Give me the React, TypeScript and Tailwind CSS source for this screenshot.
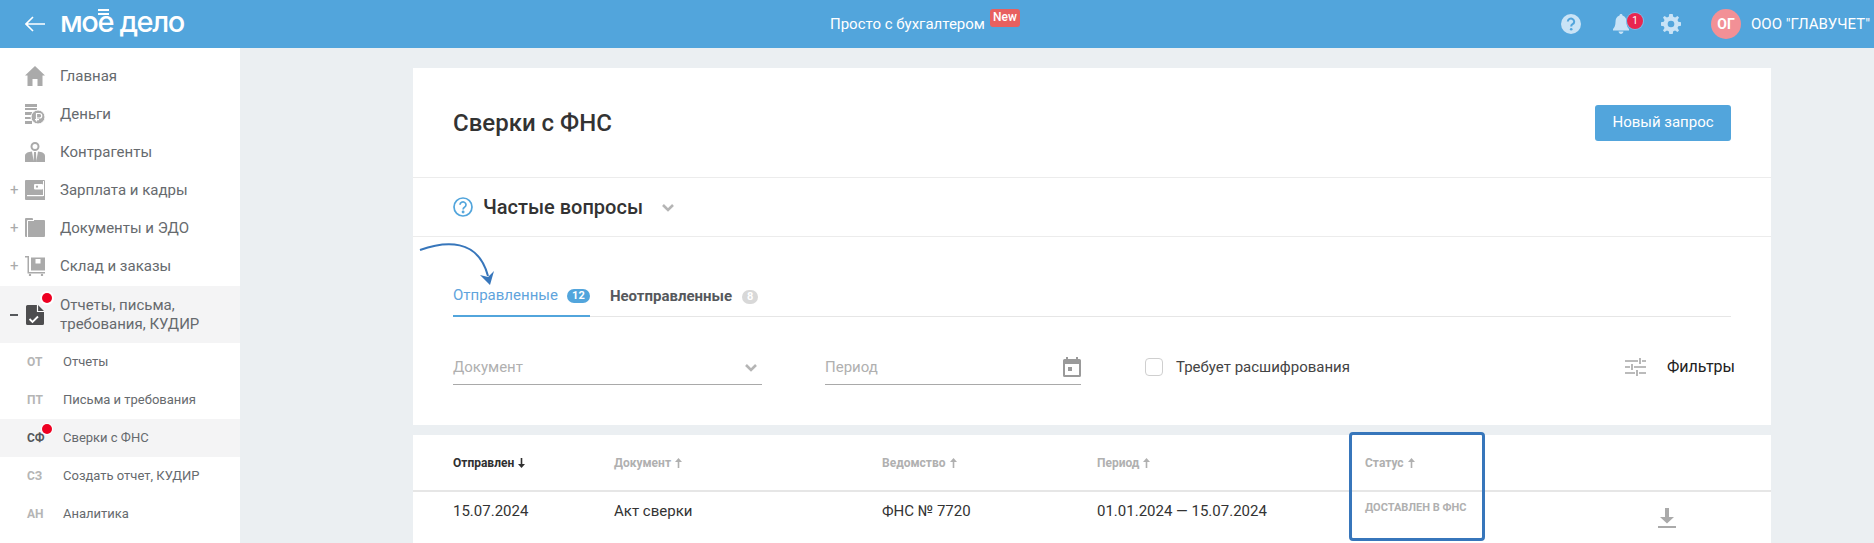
import React from "react"

const Home = () => (
    <svg width="20" height="20" viewBox="0 0 20 20" fill="#aaaaaa">
        <path d="M10 0 L20 9.5 L17.5 9.5 L17.5 20 L12.5 20 L12.5 13 L7.5 13 L7.5 20 L2.5 20 L2.5 9.5 L0 9.5 Z" />
    </svg>
)

const Money = () => (
    <svg width="20" height="20" viewBox="0 0 20 20" fill="#aaaaaa">
        <rect x="0" y="0" width="12" height="3" />
        <rect x="0" y="4" width="12" height="2" />
        <rect x="0" y="8" width="7" height="3" />
        <rect x="0" y="13" width="6" height="2" />
        <rect x="0" y="17" width="7" height="3" />
        <circle cx="13" cy="13" r="7" stroke="#fff" strokeWidth="1" />
        <path d="M11.5 17.5 V9.5 h3 a2 2 0 0 1 0 4.5 h-3 M10 15.7 h4" fill="none" stroke="#fff" strokeWidth="1.2" />
    </svg>
)

const Person = () => (
    <svg width="20" height="20" viewBox="0 0 20 20" fill="#aaaaaa">
        <circle cx="10" cy="4.5" r="3.5" fill="none" stroke="#aaaaaa" strokeWidth="2" />
        <path d="M0 20 V14 C0 11 3 10 7 9.5 L8.8 20 Z M20 20 V14 C20 11 17 10 13 9.5 L11.2 20 Z M9 10 h2 l.4 10 h-2.8 Z" />
    </svg>
)

const Wallet = () => (
    <svg width="20" height="20" viewBox="0 0 20 20" fill="#aaaaaa">
        <path d="M1 0 H19 a1 1 0 0 1 1 1 V20 H1 a1 1 0 0 1 -1 -1 V1 a1 1 0 0 1 1 -1 Z" />
        <rect x="2" y="15" width="16" height="1.2" fill="#fff" />
        <rect x="18" y="1" width="1" height="15" fill="#fff" />
        <rect x="9" y="4" width="9" height="5.5" rx="1" fill="#fff" />
        <circle cx="12" cy="6.7" r="1.1" fill="#aaaaaa" />
    </svg>
)

const Folder = () => (
    <svg width="20" height="20" viewBox="0 0 20 20" fill="#aaaaaa">
        <path d="M1 0 H7 a1 1 0 0 1 1 1 V2 H19 a1 1 0 0 1 1 1 V18 a1 1 0 0 1 -1 1 H1 a1 1 0 0 1 -1 -1 V1 a1 1 0 0 1 1 -1 Z" />
        <path d="M2.5 19 V2.5 H9" fill="none" stroke="#fff" strokeWidth="1" />
    </svg>
)

const Cart = () => (
    <svg width="20" height="20" viewBox="0 0 20 20" fill="#aaaaaa">
        <path d="M0 0 H4 V16 H20 V17.5 H2.5 V1.5 H0 Z" />
        <rect x="6" y="1.5" width="14" height="13" />
        <rect x="10.5" y="3" width="5" height="4.5" fill="#fff" />
        <circle cx="5" cy="19" r="1.2" />
        <circle cx="17" cy="19" r="1.2" />
    </svg>
)

const ReportDoc = () => (
    <svg width="18" height="20" viewBox="0 0 18 20">
        <path d="M1.5 0 H12 L18 6 V18.5 a1.5 1.5 0 0 1 -1.5 1.5 H1.5 A1.5 1.5 0 0 1 0 18.5 V1.5 A1.5 1.5 0 0 1 1.5 0 Z" fill="#4d4d4f" />
        <path d="M11.5 0 V6.5 H18" fill="none" stroke="#fff" strokeWidth="1.2" />
        <path d="M3.5 14 L6.5 17 L12 11.5" fill="none" stroke="#fff" strokeWidth="1.8" />
    </svg>
)

const Row = ({icon, label, plus}: {icon: React.ReactNode, label: string, plus?: boolean}) => (
    <div className="flex h-[38px] items-center relative pl-[25px]">
        {plus && <span className="absolute left-[10px] text-[15px] text-[#aaaaaa]">+</span>}
        <span className="w-[20px] h-[20px] flex items-center justify-center">{icon}</span>
        <span className="ml-[15px] text-[15px] text-[#666a6e]">{label}</span>
    </div>
)

const SubRow = ({short, label, active}: {short: string, label: string, active?: boolean}) => (
    <div className={active ? "flex h-[38px] items-center relative pl-[27px] bg-[#f4f4f5]" : "flex h-[38px] items-center relative pl-[27px]"}>
        <span className={active ? "w-[36px] text-[12px] font-bold text-[#55585c]" : "w-[36px] text-[12px] font-bold text-[#b5b5b5]"}>{short}</span>
        <span className="text-[13px] text-[#666a6e]">{label}</span>
        {active && <span className="absolute left-[42px] top-[5px] w-[10px] h-[10px] rounded-full bg-[#ee0022] ring-1 ring-white"></span>}
    </div>
)

const Sidebar = () => (
    <aside className="w-[240px] shrink-0 bg-white pt-[9px]">
        <Row icon={<Home />} label="Главная" />
        <Row icon={<Money />} label="Деньги" />
        <Row icon={<Person />} label="Контрагенты" />
        <Row icon={<Wallet />} label="Зарплата и кадры" plus />
        <Row icon={<Folder />} label="Документы и ЭДО" plus />
        <Row icon={<Cart />} label="Склад и заказы" plus />
        <div className="flex h-[57px] mt-[1px] items-center relative pl-[26px] bg-[#f4f4f5]">
            <span className="absolute left-[10px] w-[8px] h-[2px] bg-[#55585c]"></span>
            <ReportDoc />
            <span className="ml-[16px] text-[15px] leading-[19px] text-[#666a6e]">Отчеты, письма,<br />требования, КУДИР</span>
            <span className="absolute left-[42px] top-[7px] w-[10px] h-[10px] rounded-full bg-[#ee0022] ring-2 ring-white"></span>
        </div>
        <SubRow short="ОТ" label="Отчеты" />
        <SubRow short="ПТ" label="Письма и требования" />
        <SubRow short="СФ" label="Сверки с ФНС" active />
        <SubRow short="СЗ" label="Создать отчет, КУДИР" />
        <SubRow short="АН" label="Аналитика" />
    </aside>
)

const Header = () => (
    <header className="h-[48px] bg-[#52a5dc] flex items-center text-white relative shrink-0">
        <svg className="ml-[25px]" width="20" height="16" viewBox="0 0 20 16" fill="none" stroke="#fff" strokeWidth="1.6">
            <path d="M20 8 H1 M8 1 L1 8 L8 15" />
        </svg>
        <div className="ml-[15px] w-[770px] relative mb-[4px]">
            <span className="text-[29px] font-medium leading-[32px] tracking-[-1.4px] font-['Inter',sans-serif]">мое дело</span>
            <span className="absolute left-[38px] top-[3px] w-[11px] h-[2px] bg-white"></span>
            <span className="absolute left-[38px] top-[7px] w-[11px] h-[2px] bg-white"></span>
        </div>
        <span className="text-[15px]">Просто с бухгалтером</span>
        <span className="ml-[5px] mb-[12px] w-[30px] h-[18px] rounded-[3px] bg-[#e8605f] text-[12px] text-center font-medium leading-[17px]">New</span>
        <div className="ml-auto flex items-center pr-[4px]">
            <svg width="20" height="20" viewBox="0 0 20 20">
                <circle cx="10" cy="10" r="10" fill="#c9e3f6" />
                <path d="M6.8 7.5 a3.2 3 0 1 1 4.8 2.7 c-1 .6 -1.4 1 -1.4 2.2" fill="none" stroke="#52a5dc" strokeWidth="2" />
                <circle cx="10.2" cy="15.3" r="1.3" fill="#52a5dc" />
            </svg>
            <div className="relative ml-[32px] w-[16px] h-[20px]">
                <svg width="16" height="20" viewBox="0 0 16 20" fill="#c9e3f6">
                    <path d="M8 0 C9 0 9.5 .6 9.5 1.6 C12.5 2.4 13.5 5 13.5 8 C13.5 11.5 14.5 13.5 16 15 V16.5 H0 V15 C1.5 13.5 2.5 11.5 2.5 8 C2.5 5 3.5 2.4 6.5 1.6 C6.5 .6 7 0 8 0 Z M5.5 17.5 H10.5 C10.2 19 9.2 20 8 20 C6.8 20 5.8 19 5.5 17.5 Z" />
                </svg>
                <span className="absolute left-[14px] top-[-1px] w-[16px] h-[16px] rounded-full bg-[#e8264f] ring-1 ring-[#7dbbe6] text-[10px] leading-[16px] text-center">1</span>
            </div>
            <svg className="ml-[32px]" width="20" height="20" viewBox="0 0 24 24" fill="#c9e3f6">
                <path fillRule="evenodd" d="M10 0 H14 L14.7 3.3 L16.9 4.2 L19.8 2.4 L21.6 4.2 L19.8 7.1 L20.7 9.3 L24 10 V14 L20.7 14.7 L19.8 16.9 L21.6 19.8 L19.8 21.6 L16.9 19.8 L14.7 20.7 L14 24 H10 L9.3 20.7 L7.1 19.8 L4.2 21.6 L2.4 19.8 L4.2 16.9 L3.3 14.7 L0 14 V10 L3.3 9.3 L4.2 7.1 L2.4 4.2 L4.2 2.4 L7.1 4.2 L9.3 3.3 Z M12 8 a4 4 0 1 0 0 8 a4 4 0 1 0 0 -8 Z" />
            </svg>
            <span className="ml-[30px] w-[30px] h-[30px] rounded-full bg-[#f29096] text-[14px] font-bold leading-[30px] text-center">ОГ</span>
            <span className="ml-[10px] text-[15px]">ООО "ГЛАВУЧЕТ"</span>
        </div>
    </header>
)

const Chevron = ({cls}: {cls: string}) => (
    <svg className={cls} width="12" height="8" viewBox="0 0 12 8" fill="none" stroke="#b5b5b5" strokeWidth="2.6">
        <path d="M1 1 L6 6 L11 1" />
    </svg>
)

const Tabs = () => (
    <div className="flex h-[40px] ml-[40px] mr-[40px] mt-[40px] border-b border-[#e6e6e6] items-center">
        <div className="h-[40px] flex items-center border-b-2 border-[#52a5dc] text-[15px] text-[#5fa4dc]">
            Отправленные
            <span className="ml-[9px] w-[23px] h-[14px] rounded-full bg-[#52a5dc] text-white text-[11px] font-bold leading-[14px] text-center">12</span>
        </div>
        <div className="ml-[20px] flex items-center text-[15px] font-bold text-[#55585c]">
            Неотправленные
            <span className="ml-[10px] w-[16px] h-[14px] rounded-full bg-[#d8d8d8] text-white text-[11px] font-bold leading-[14px] text-center">8</span>
        </div>
    </div>
)

const Filters = () => (
    <div className="flex ml-[40px] mr-[36px] mt-[40px] h-[27px] items-start text-[15px] leading-[20px]">
        <div className="w-[309px] h-[27px] flex items-start justify-between border-b border-[#a9a9a9] box-content">
            <span className="text-[#b0b0b0]">Документ</span>
            <Chevron cls="mr-[5px] mt-[7px]" />
        </div>
        <div className="ml-[63px] w-[256px] h-[27px] flex items-start justify-between border-b border-[#a9a9a9] box-content">
            <span className="text-[#b0b0b0]">Период</span>
            <svg width="18" height="20" viewBox="0 0 18 20" fill="#9a9a9a">
                <path fillRule="evenodd" d="M3 0 H5 V2 H13 V0 H15 V2 H16.5 A1.5 1.5 0 0 1 18 3.5 V18.5 A1.5 1.5 0 0 1 16.5 20 H1.5 A1.5 1.5 0 0 1 0 18.5 V3.5 A1.5 1.5 0 0 1 1.5 2 H3 Z M2 7 V18 H16 V7 Z" />
                <rect x="5" y="10" width="4" height="4" />
            </svg>
        </div>
        <span className="ml-[64px] mt-[1px] w-[18px] h-[18px] rounded-[4px] border border-[#cfcfcf] bg-white"></span>
        <span className="ml-[13px] text-[#444]">Требует расшифрования</span>
        <svg className="ml-auto mt-[1px]" width="21" height="18" viewBox="0 0 21 18" fill="none" stroke="#a5a5a5" strokeWidth="1.6">
            <path d="M0 3 H13 M17 3 H21 M15 0 V6 M0 9 H5 M9 9 H21 M7 6 V12 M0 15 H10 M14 15 H21 M12 12 V18" />
        </svg>
        <span className="ml-[21px] text-[16px] text-[#222]">Фильтры</span>
    </div>
)

const Head = ({label, up, dark}: {label: string, up?: boolean, dark?: boolean}) => (
    <span className={dark ? "flex items-center gap-[4px] text-[12px] font-bold text-[#2f2f2f]" : "flex items-center gap-[4px] text-[12px] font-bold text-[#b0b0b0]"}>
        {label}
        <svg width="7" height="10" viewBox="0 0 7 10" fill="currentColor">
            <path d={up ? "M3.5 0 L7 4 H4.3 V10 H2.7 V4 H0 Z" : "M3.5 10 L7 6 H4.3 V0 H2.7 V6 H0 Z"} />
        </svg>
    </span>
)

const Table = () => (
    <section className="mt-[10px] bg-white h-[120px]">
        <div className="grid grid-cols-[161px_268px_215px_268px_1fr] pl-[40px] h-[57px] items-center border-b-2 border-[#e6e6e6]">
            <Head label="Отправлен" dark />
            <Head label="Документ" up />
            <Head label="Ведомство" up />
            <Head label="Период" up />
            <Head label="Статус" up />
        </div>
        <div className="grid grid-cols-[161px_268px_215px_268px_1fr] pl-[40px] pt-[8px] text-[15px] text-[#333]">
            <span>15.07.2024</span>
            <span>Акт сверки</span>
            <span>ФНС № 7720</span>
            <span>01.01.2024 — 15.07.2024</span>
            <div className="flex">
                <span className="text-[11px] font-bold text-[#b0b0b0] leading-[16px]">ДОСТАВЛЕН В ФНС</span>
                <svg className="ml-[190px] mt-[8px]" width="20" height="20" viewBox="0 0 20 20" fill="#aaaaaa">
                    <path d="M8 0 H12 V9 H17 L10 15.5 L3 9 H8 Z" />
                    <rect x="1" y="18" width="18" height="2" />
                </svg>
            </div>
        </div>
    </section>
)

export default function App() {
    return (
        <div className="relative w-[1874px] h-[543px] overflow-hidden flex flex-col bg-[#ebeff2] font-['Roboto',sans-serif]">
            <Header />
            <div className="flex flex-1 min-h-0">
                <Sidebar />
                <main className="flex-1 pl-[173px] pr-[103px] pt-[20px]">
                    <section className="bg-white h-[357px]">
                        <div className="h-[110px] px-[40px] flex items-center justify-between border-b border-[#ececec]">
                            <h1 className="text-[24px] font-medium text-[#333]">Сверки с ФНС</h1>
                            <button className="w-[136px] h-[36px] rounded-[3px] bg-[#52a5dc] text-white text-[15px]">Новый запрос</button>
                        </div>
                        <div className="h-[59px] px-[40px] flex items-center border-b border-[#ececec]">
                            <svg width="20" height="20" viewBox="0 0 20 20" fill="none" stroke="#52a5dc" strokeWidth="1.7">
                                <circle cx="10" cy="10" r="9" />
                                <path d="M7 7.7 a3 2.8 0 1 1 4.5 2.5 c-1 .6 -1.4 1 -1.4 2.3" />
                                <circle cx="10.1" cy="15" r=".6" />
                            </svg>
                            <span className="ml-[10px] text-[20px] font-medium text-[#333]">Частые вопросы</span>
                            <Chevron cls="ml-[19px] mt-[2px]" />
                        </div>
                        <Tabs />
                        <Filters />
                    </section>
                    <Table />
                </main>
            </div>
            <svg className="absolute left-[415px] top-[238px]" width="85" height="52" viewBox="415 238 85 52" fill="none">
                <path d="M420 250 C445 241 478 238 488 276" stroke="#3776bb" strokeWidth="2" />
                <path d="M490 285 L480 275 L488 277 L494 271 Z" fill="#3776bb" />
            </svg>
            <div className="absolute left-[1349px] top-[432px] w-[136px] h-[109px] rounded-[4px] border-[3px] border-[#3776bb]"></div>
        </div>
    )
}
